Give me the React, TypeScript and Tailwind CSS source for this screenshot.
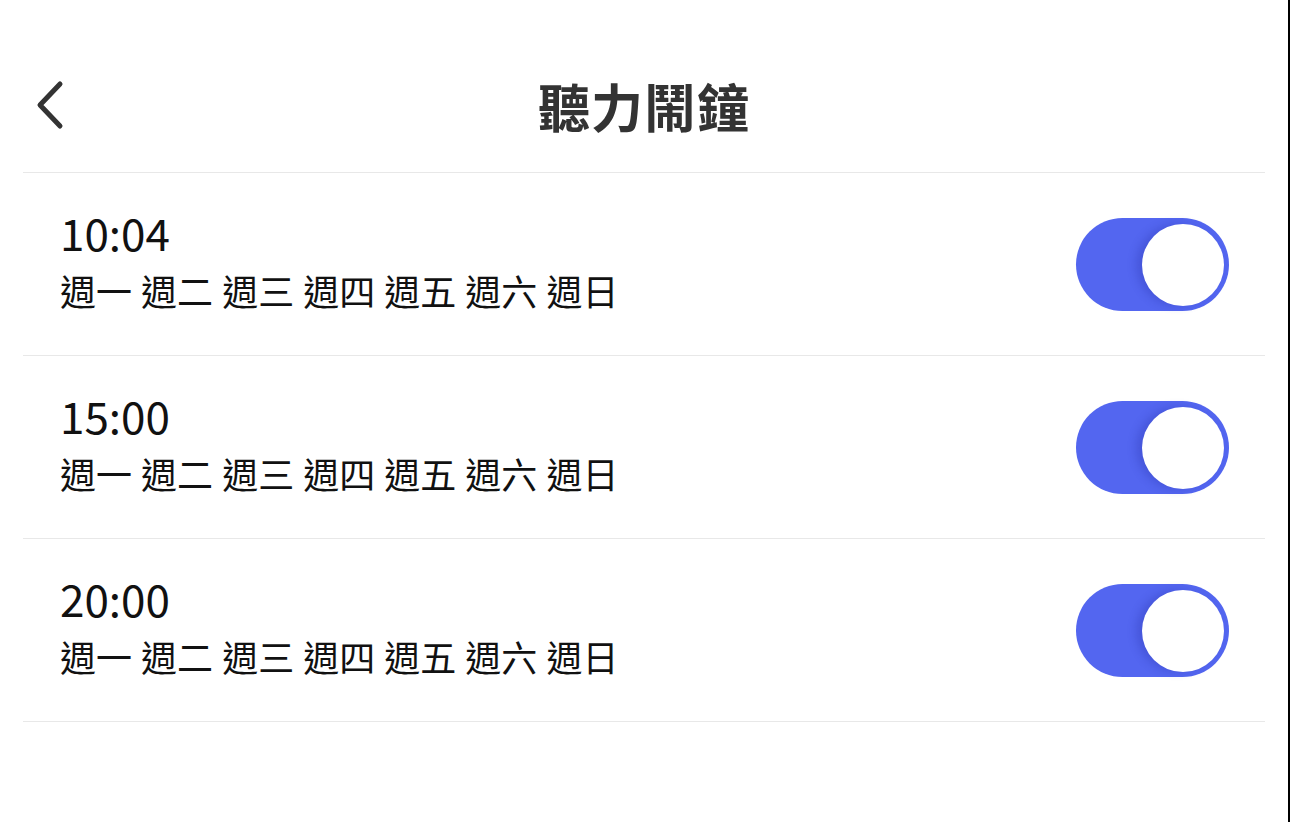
import React from "react";

const font = { fontFamily: '"Noto Sans CJK TC", "Noto Sans", sans-serif' };

function Toggle() {
  return (
    <div className="relative w-[153px] h-[93px] rounded-full bg-[#5366f0] shrink-0">
      <div className="absolute right-[5px] top-[6px] w-[82px] h-[82px] rounded-full bg-white shadow-[-6px_0_8px_rgba(40,50,170,0.3)]" />
    </div>
  );
}

const rows = ["10:04", "15:00", "20:00"];
const days = "週一 週二 週三 週四 週五 週六 週日";

export default function App() {
  return (
    <div className="w-[1290px] h-[822px] bg-white border-r-2 border-black overflow-hidden" style={font}>
      <div className="relative h-[172px] flex items-center justify-center pt-[40px]">
        <svg className="absolute left-[34px] top-[80px]" width="32" height="50" viewBox="0 0 32 50">
          <path d="M26 4 L6 25 L26 46" fill="none" stroke="#333" strokeWidth="5" strokeLinecap="round" strokeLinejoin="round" />
        </svg>
        <div className="text-[52px] font-bold text-[#333] leading-none tracking-[1px]">聽力鬧鐘</div>
      </div>
      <div className="mx-[23px] border-t border-[#e8e8e8]" />
      {rows.map((t) => (
        <div key={t}>
          <div className="h-[182px] flex items-center justify-between pl-[60px] pr-[59px]">
            <div className="flex flex-col text-[#111] pb-[6px]">
              <div className="text-[44px] leading-[44px]">{t}</div>
              <div className="text-[36px] leading-[44px] mt-[14px] whitespace-pre font-normal [word-spacing:1px]">{days}</div>
            </div>
            <Toggle />
          </div>
          <div className="mx-[23px] border-t border-[#e8e8e8]" />
        </div>
      ))}
    </div>
  );
}
